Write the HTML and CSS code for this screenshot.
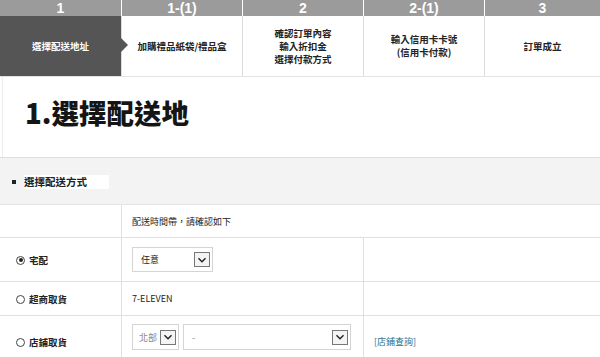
FILE: index.html
```html
<!DOCTYPE html>
<html lang="zh-Hant">
<head>
    <meta charset="UTF-8">
    <meta name="viewport" content="width=device-width, initial-scale=1.0">
    <title>選擇配送地</title>
    <link rel="stylesheet" href="styles.css">
</head>
<body>
    <div class="steps">
        <div class="step-num">1</div>
        <div class="step-num">1-(1)</div>
        <div class="step-num">2</div>
        <div class="step-num">2-(1)</div>
        <div class="step-num">3</div>
        <div class="step-name active">選擇配送地址</div>
        <div class="step-name">加購禮品紙袋/禮品盒</div>
        <div class="step-name">確認訂單內容<br>輸入折扣金<br>選擇付款方式</div>
        <div class="step-name">輸入信用卡卡號<br>(信用卡付款)</div>
        <div class="step-name">訂單成立</div>
    </div>

    <div class="page-title">
        <h1>1.選擇配送地</h1>
    </div>

    <div class="section-head">
        <span class="bullet"></span>
        <span class="section-label">選擇配送方式</span>
    </div>

    <table class="ship-table">
        <tr class="row-note">
            <td class="label"></td>
            <td colspan="2">配送時間帶，請確認如下</td>
        </tr>
        <tr class="row-home">
            <td class="label"><span class="radio checked"></span>宅配</td>
            <td>
                <div class="select select-time">
                    <span>任意</span>
                    <span class="select-btn"><svg viewBox="0 0 10 10" width="10" height="10"><path d="M1.5 3.2 L5 6.8 L8.5 3.2" fill="none" stroke="#222" stroke-width="1.4"/></svg></span>
                </div>
            </td>
            <td></td>
        </tr>
        <tr class="row-cvs">
            <td class="label"><span class="radio"></span>超商取貨</td>
            <td>7-ELEVEN</td>
            <td></td>
        </tr>
        <tr class="row-store">
            <td class="label store-label"><span class="radio"></span>店鋪取貨</td>
            <td class="select-cell">
                <div class="select-pair">
                    <div class="select select-area">
                        <span class="muted">北部</span>
                        <span class="select-btn"><svg viewBox="0 0 10 10" width="10" height="10"><path d="M1.5 3.2 L5 6.8 L8.5 3.2" fill="none" stroke="#222" stroke-width="1.4"/></svg></span>
                    </div>
                    <div class="select select-store">
                        <span class="muted">-</span>
                        <span class="select-btn"><svg viewBox="0 0 10 10" width="10" height="10"><path d="M1.5 3.2 L5 6.8 L8.5 3.2" fill="none" stroke="#222" stroke-width="1.4"/></svg></span>
                    </div>
                </div>
            </td>
            <td class="link-cell"><a href="#" class="store-link">[店鋪查詢]</a></td>
        </tr>
    </table>
</body>
</html>
```

FILE: styles.css
```css
body {
    margin: 0;
    font-family: "Noto Sans CJK TC", "Noto Sans", sans-serif;
    color: #222;
    background-color: #fff;
    width: 600px;
    height: 357px;
    overflow: hidden;
}
.steps {
    display: grid;
    grid-template-columns: 121px 120px 120px 120px 1fr;
    grid-template-rows: 16px 60px;
    column-gap: 1px;
    background-color: #fff;
    border-bottom: 1px solid #e2e2e2;
}
.step-num {
    background-color: #9b9b9b;
    color: #fff;
    font-family: "Liberation Sans", Arial, sans-serif;
    font-weight: bold;
    font-size: 14px;
    line-height: 16px;
    text-align: center;
}
.step-name {
    position: relative;
    display: flex;
    align-items: center;
    justify-content: center;
    text-align: center;
    font-size: 9.5px;
    font-weight: bold;
    line-height: 13px;
    color: #222;
    background-color: #fff;
    box-shadow: -1px 0 0 #dcdcdc;
}
.step-name.active {
    background-color: #555;
    color: #fff;
    box-shadow: none;
}
.step-name.active::after {
    content: "";
    position: absolute;
    right: -7px;
    top: 22px;
    border-top: 7px solid transparent;
    border-bottom: 7px solid transparent;
    border-left: 7px solid #555;
    z-index: 1;
}
.page-title {
    height: 80px;
    padding-left: 22px;
    border-left: 1px solid #ececec;
    margin-left: 2px;
    display: flex;
    align-items: flex-start;
}
.page-title h1 {
    margin: 0;
    padding-top: 15px;
    font-size: 27.5px;
    line-height: 40px;
    font-weight: 900;
    color: #151515;
}
.section-head {
    height: 46px;
    border-top: 1px solid #dedede;
    border-bottom: 1px solid #e4e4e4;
    background-color: #f3f3f3;
    display: flex;
    align-items: center;
    padding-left: 12px;
}
.bullet {
    width: 4px;
    height: 4px;
    background-color: #222;
    margin: 2px 8px 0 0;
}
.section-label {
    background-color: #fff;
    font-size: 10.5px;
    font-weight: bold;
    line-height: 14px;
    padding: 0 22px 0 0;
    margin-top: 2px;
}
.ship-table {
    width: 100%;
    border-collapse: collapse;
    font-size: 9px;
}
.ship-table td {
    border-top: 1px solid #e0e0e0;
    padding: 0 0 0 10px;
    vertical-align: middle;
}
.ship-table td + td {
    border-left: 1px solid #e0e0e0;
}
.ship-table .label {
    width: 105px;
    padding-left: 16px;
    font-weight: bold;
    font-size: 9.5px;
}
.ship-table tr td:nth-child(2) {
    width: 231px;
}
.row-note td {
    height: 32px;
    border-top: none;
}
.row-home td {
    height: 43px;
}
.row-cvs td {
    height: 33px;
}
.row-store td {
    height: 40px;
}
.ship-table .store-label {
    vertical-align: top;
    padding-top: 19px;
}
.radio {
    display: inline-block;
    width: 7px;
    height: 7px;
    border: 1px solid #444;
    border-radius: 50%;
    margin-right: 4px;
    vertical-align: -1px;
    position: relative;
    background-color: #fff;
}
.radio.checked::after {
    content: "";
    position: absolute;
    left: 1.5px;
    top: 1.5px;
    width: 4px;
    height: 4px;
    border-radius: 50%;
    background-color: #222;
}
.select {
    display: flex;
    align-items: center;
    justify-content: space-between;
    border: 1px solid #d4d4d4;
    background-color: #fff;
    box-sizing: border-box;
    padding: 0 2px 0 8px;
}
.select-time {
    width: 81px;
    height: 25px;
}
.select-pair {
    display: flex;
    gap: 4px;
}
.ship-table .select-cell {
    vertical-align: top;
    padding-top: 8px;
}
.select-area {
    width: 47px;
    height: 26px;
    padding-left: 6px;
}
.select-store {
    width: 168px;
    height: 26px;
}
.select-btn {
    display: flex;
    align-items: center;
    justify-content: center;
    width: 14px;
    height: 13px;
    border: 1px solid #777;
    background-color: #f4f4f4;
}
.muted {
    color: #888;
}
.ship-table .link-cell {
    vertical-align: top;
    padding-top: 19px;
}
.store-link {
    color: #2b6d8c;
    text-decoration: none;
}
```
